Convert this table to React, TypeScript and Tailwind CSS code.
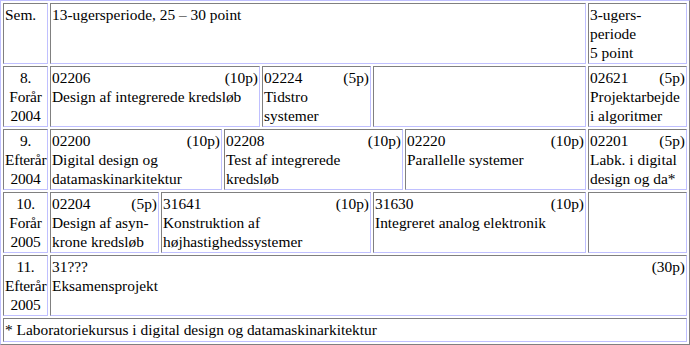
import type { ReactNode } from "react";

interface CellProps {
  className?: string;
  children?: ReactNode;
}

function Cell({ className = "", children }: CellProps) {
  return (
    <div
      className={`border border-t-[#808080] border-l-[#808080] border-b-[#c0c0ff] border-r-[#c0c0ff] p-[1px] overflow-hidden ${className}`}
    >
      {children}
    </div>
  );
}

interface CourseProps {
  code: string;
  points: string;
  className?: string;
  children: ReactNode;
}

function Course({ code, points, className = "", children }: CourseProps) {
  return (
    <Cell className={className}>
      <div className="flex justify-between">
        <span>{code}</span>
        <span>{points}</span>
      </div>
      <div>{children}</div>
    </Cell>
  );
}

function Semester({ nr, season, year }: { nr: string; season: string; year: string }) {
  return (
    <Cell className="text-center whitespace-nowrap tracking-[-0.2px]">
      {nr}
      <br />
      {season}
      <br />
      {year}
    </Cell>
  );
}

export default function App() {
  return (
    <div className="w-[690px] h-[345px] bg-white text-black font-['Liberation_Serif',serif] text-[15.4px] leading-[19px]">
      <div className="border border-t-[#c0c0ff] border-l-[#c0c0ff] border-b-[#808080] border-r-[#808080] p-[2px]">
        <div className="grid grid-cols-[45px_109px_61px_36px_109px_30px_181px_99px] grid-rows-[61px_61px_61px_61px_61px_24px] gap-[2px]">
          {/* row 1 */}
          <Cell>Sem.</Cell>
          <Cell className="col-span-6">13-ugersperiode, 25 – 30 point</Cell>
          <Cell>
            3-ugers-
            <br />
            periode
            <br />5 point
          </Cell>

          {/* row 2 */}
          <Semester nr="8." season="Forår" year="2004" />
          <Course code="02206" points="(10p)" className="col-span-3">
            Design af integrerede kredsløb
          </Course>
          <Course code="02224" points="(5p)">
            Tidstro
            <br />
            systemer
          </Course>
          <Cell className="col-span-2" />
          <Course code="02621" points="(5p)">
            Projektarbejde
            <br />i algoritmer
          </Course>

          {/* row 3 */}
          <Semester nr="9." season="Efterår" year="2004" />
          <Course code="02200" points="(10p)" className="col-span-2">
            Digital design og
            <br />
            datamaskinarkitektur
          </Course>
          <Course code="02208" points="(10p)" className="col-span-3">
            Test af integrerede
            <br />
            kredsløb
          </Course>
          <Course code="02220" points="(10p)">
            Parallelle systemer
          </Course>
          <Course code="02201" points="(5p)">
            Labk. i digital
            <br />
            design og da*
          </Course>

          {/* row 4 */}
          <Semester nr="10." season="Forår" year="2005" />
          <Course code="02204" points="(5p)">
            Design af asyn-
            <br />
            krone kredsløb
          </Course>
          <Course code="31641" points="(10p)" className="col-span-3">
            Konstruktion af
            <br />
            højhastighedssystemer
          </Course>
          <Course code="31630" points="(10p)" className="col-span-2">
            Integreret analog elektronik
          </Course>
          <Cell />

          {/* row 5 */}
          <Semester nr="11." season="Efterår" year="2005" />
          <Course code="31???" points="(30p)" className="col-span-7">
            Eksamensprojekt
          </Course>

          {/* footnote */}
          <Cell className="col-span-8">
            * Laboratoriekursus i digital design og datamaskinarkitektur
          </Cell>
        </div>
      </div>
    </div>
  );
}
